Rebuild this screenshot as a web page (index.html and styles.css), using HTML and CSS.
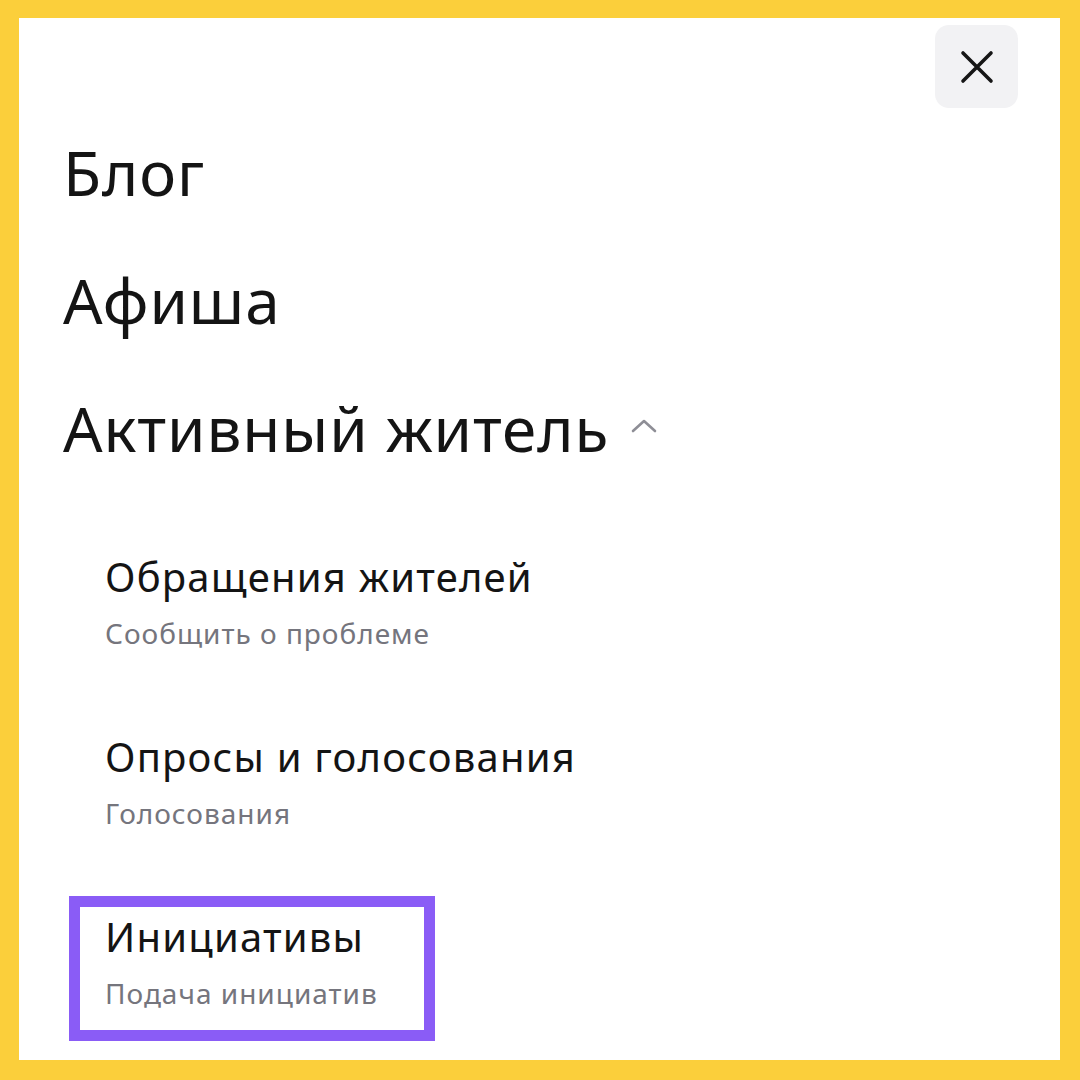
FILE: index.html
```html
<!DOCTYPE html>
<html lang="ru">
<head>
    <meta charset="UTF-8">
    <meta name="viewport" content="width=device-width, initial-scale=1.0">
    <title>Меню</title>
    <link rel="stylesheet" href="styles.css">
</head>
<body>
    <div class="panel">
        <div class="top">
            <button class="close" aria-label="Закрыть">
                <svg width="34" height="34" viewBox="0 0 34 34">
                    <path d="M3 3 L31 31 M31 3 L3 31" stroke="#161616" stroke-width="3.6" stroke-linecap="round" fill="none"/>
                </svg>
            </button>
        </div>

        <nav class="menu">
            <a class="menu-item">Блог</a>
            <a class="menu-item">Афиша</a>
            <a class="menu-item open">
                Активный житель
                <svg class="chevron" width="26" height="14" viewBox="0 0 26 14">
                    <path d="M2 12 L13 2 L24 12" stroke="#8e8e96" stroke-width="2.6" stroke-linecap="round" stroke-linejoin="round" fill="none"/>
                </svg>
            </a>

            <div class="submenu">
                <a class="sub-item">
                    <span class="sub-title">Обращения жителей</span>
                    <span class="sub-text">Сообщить о проблеме</span>
                </a>
                <a class="sub-item">
                    <span class="sub-title">Опросы и голосования</span>
                    <span class="sub-text">Голосования</span>
                </a>
                <a class="sub-item selected">
                    <span class="sub-title">Инициативы</span>
                    <span class="sub-text">Подача инициатив</span>
                </a>
            </div>
        </nav>
    </div>
</body>
</html>
```

FILE: styles.css
```css
body {
    margin: 0;
    padding: 18px 20px 20px 19px;
    height: 1080px;
    box-sizing: border-box;
    background-color: #fbcf3b;
    font-family: "Noto Sans", "Open Sans", sans-serif;
    color: #141414;
}

.panel {
    background: white;
    height: 100%;
    box-sizing: border-box;
    padding: 7px 42px 0 44px;
    overflow: hidden;
}

.top {
    display: flex;
    justify-content: flex-end;
}

.close {
    width: 83px;
    height: 83px;
    border: none;
    border-radius: 14px;
    background-color: #f2f2f4;
    display: flex;
    align-items: center;
    justify-content: center;
    padding: 0;
    cursor: pointer;
}

.menu {
    display: flex;
    flex-direction: column;
    margin-top: 28px;
}

.menu-item {
    font-size: 62px;
    line-height: 72px;
    letter-spacing: 0.9px;
    margin-bottom: 56px;
    display: flex;
    align-items: center;
    gap: 22px;
}

.menu-item.open {
    margin-bottom: 72px;
}

.chevron {
    margin-top: -4px;
}

.submenu {
    display: flex;
    flex-direction: column;
    gap: 35px;
    margin-left: 6px;
}

.sub-item {
    display: flex;
    flex-direction: column;
    align-self: flex-start;
    padding: 6px 46px 20px 25px;
    border: 11px solid transparent;
}

.sub-item.selected {
    border-color: #8a5cf6;
}

.sub-title {
    font-size: 40px;
    line-height: 48px;
    letter-spacing: 1.2px;
}

.sub-text {
    font-size: 28px;
    line-height: 34px;
    letter-spacing: 1px;
    margin-top: 15px;
    color: #75757d;
}
```
